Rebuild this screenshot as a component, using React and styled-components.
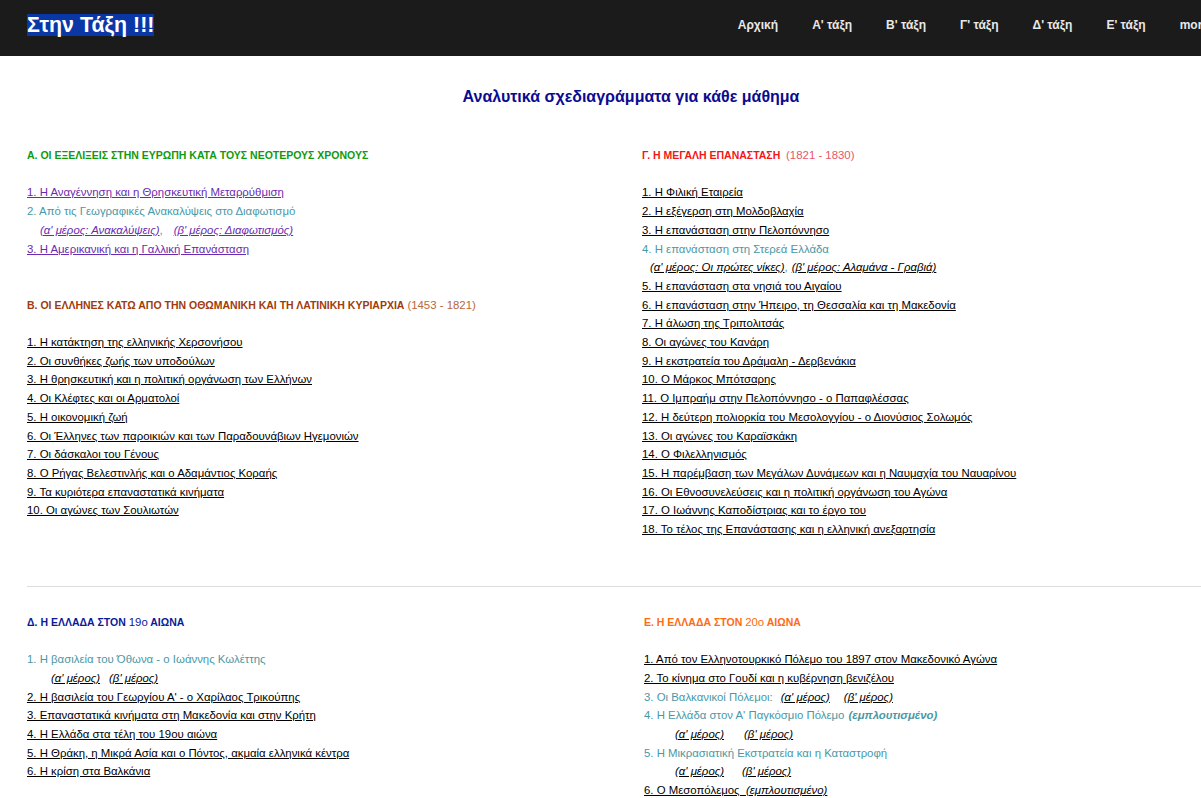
import React from 'react'
import styled, { createGlobalStyle } from 'styled-components'

const LINE = 18.7

const GlobalStyle = createGlobalStyle`
  html { scrollbar-width: none; }
  body {
    margin: 0;
    background: #fff;
    font-family: "Liberation Sans", Arial, sans-serif;
    font-size: 11.4px;
    overflow-x: hidden;
  }
`

const Page = styled.div`
  width: 1262px;
`

const TopBar = styled.header`
  height: 56px;
  box-sizing: border-box;
  background: #1b1b1b;
  display: flex;
  align-items: flex-start;
  padding: 14px 36px 0 27px;
`

const Logo = styled.a`
  font-size: 21.4px;
  font-weight: bold;
  line-height: 22px;
  color: #fff;
  background: #0a37a6;
  text-decoration: none;
  white-space: nowrap;
`

const Nav = styled.nav`
  display: flex;
  margin-left: auto;
`

const NavItem = styled.a`
  padding: 0 17px;
  font-size: 12px;
  font-weight: bold;
  line-height: 22px;
  color: #e8e8e8;
  text-decoration: none;
  white-space: nowrap;
`

const Main = styled.main`
  padding: 0 27px;
`

const Title = styled.h1`
  margin: 32px 0 40px;
  text-align: center;
  font-size: 16px;
  line-height: 18px;
  font-weight: bold;
  color: #0b0b8f;
`

const Columns = styled.div`
  display: grid;
  grid-template-columns: 615px 1fr;
`

const Section = styled.section`
  padding-left: ${p => p.$shift || 0}px;
  margin-bottom: ${p => (p.$last ? 0 : LINE * 2)}px;
`

const Heading = styled.h2`
  margin: 0 0 ${LINE}px;
  font-size: 10.5px;
  line-height: ${LINE}px;
  font-weight: bold;
  color: ${p => p.$color};
  white-space: nowrap;
`

const Light = styled.span`
  font-size: 11.4px;
  font-weight: normal;
  color: ${p => p.$color || 'inherit'};
`

const Line = styled.div`
  line-height: ${LINE}px;
  padding-left: ${p => p.$indent || 0}px;
  color: #4a98a6;
  white-space: nowrap;
`

const Link = styled.a`
  color: ${p => (p.$tone === 'purple' ? '#6a2bb0' : '#000')};
  font-style: ${p => (p.$italic ? 'italic' : 'normal')};
  text-decoration: underline;
  margin-left: ${p => p.$gap || 0}px;
  cursor: pointer;
`

const Note = styled.span`
  font-style: italic;
  font-weight: bold;
  margin-left: ${p => p.$gap || 0}px;
`

const Divider = styled.hr`
  border: none;
  border-top: 1px solid #dcdcdc;
  margin: 47px 0 26px;
`

const nav = ["Αρχική", "Α' τάξη", "Β' τάξη", "Γ' τάξη", "Δ' τάξη", "Ε' τάξη", "more"]

const sectionB = [
  '1. Η κατάκτηση της ελληνικής Χερσονήσου',
  '2. Οι συνθήκες ζωής των υποδούλων',
  '3. Η θρησκευτική και η πολιτική οργάνωση των Ελλήνων',
  '4. Οι Κλέφτες και οι Αρματολοί',
  '5. Η οικονομική ζωή',
  '6. Οι Έλληνες των παροικιών και των Παραδουνάβιων Ηγεμονιών',
  '7. Οι δάσκαλοι του Γένους',
  '8. Ο Ρήγας Βελεστινλής και ο Αδαμάντιος Κοραής',
  '9. Τα κυριότερα επαναστατικά κινήματα',
  '10. Οι αγώνες των Σουλιωτών',
]

const sectionCTop = [
  '1. Η Φιλική Εταιρεία',
  '2. Η εξέγερση στη Μολδοβλαχία',
  '3. Η επανάσταση στην Πελοπόννησο',
]

const sectionCBottom = [
  '5. Η επανάσταση στα νησιά του Αιγαίου',
  '6. Η επανάσταση στην Ήπειρο, τη Θεσσαλία και τη Μακεδονία',
  '7. Η άλωση της Τριπολιτσάς',
  '8. Οι αγώνες του Κανάρη',
  '9. Η εκστρατεία του Δράμαλη - Δερβενάκια',
  '10. Ο Μάρκος Μπότσαρης',
  '11. Ο Ιμπραήμ στην Πελοπόννησο - ο Παπαφλέσσας',
  '12. Η δεύτερη πολιορκία του Μεσολογγίου - ο Διονύσιος Σολωμός',
  '13. Οι αγώνες του Καραϊσκάκη',
  '14. Ο Φιλελληνισμός',
  '15. Η παρέμβαση των Μεγάλων Δυνάμεων και η Ναυμαχία του Ναυαρίνου',
  '16. Οι Εθνοσυνελεύσεις και η πολιτική οργάνωση του Αγώνα',
  '17. Ο Ιωάννης Καποδίστριας και το έργο του',
  '18. Το τέλος της Επανάστασης και η ελληνική ανεξαρτησία',
]

const sectionD = [
  "2. Η βασιλεία του Γεωργίου Α' - ο Χαρίλαος Τρικούπης",
  '3. Επαναστατικά κινήματα στη Μακεδονία και στην Κρήτη',
  '4. Η Ελλάδα στα τέλη του 19ου αιώνα',
  '5. Η Θράκη, η Μικρά Ασία και ο Πόντος, ακμαία ελληνικά κέντρα',
  '6. Η κρίση στα Βαλκάνια',
]

const LinkLines = ({ items }) =>
  items.map(text => (
    <Line key={text}>
      <Link>{text}</Link>
    </Line>
  ))

const Parts = ({ indent, gap }) => (
  <Line $indent={indent}>
    <Link $italic>(α' μέρος)</Link>
    <Link $italic $gap={gap}>(β' μέρος)</Link>
  </Line>
)

const App = () => {
  return (
    <Page>
      <GlobalStyle />
      <TopBar>
        <Logo>Στην Τάξη !!!</Logo>
        <Nav>
          {nav.map(item => (
            <NavItem key={item}>{item}</NavItem>
          ))}
        </Nav>
      </TopBar>

      <Main>
        <Title>Αναλυτικά σχεδιαγράμματα για κάθε μάθημα</Title>

        <Columns>
          <div>
            <Section>
              <Heading $color="#119a0c">Α. ΟΙ ΕΞΕΛΙΞΕΙΣ ΣΤΗΝ ΕΥΡΩΠΗ ΚΑΤΑ ΤΟΥΣ ΝΕΟΤΕΡΟΥΣ ΧΡΟΝΟΥΣ</Heading>
              <Line>
                <Link $tone="purple">1. Η Αναγέννηση και η Θρησκευτική Μεταρρύθμιση</Link>
              </Line>
              <Line>2. Από τις Γεωγραφικές Ανακαλύψεις στο Διαφωτισμό</Line>
              <Line $indent={13}>
                <Link $tone="purple" $italic>(α' μέρος: Ανακαλύψεις)</Link>,
                <Link $tone="purple" $italic $gap={11}>(β' μέρος: Διαφωτισμός)</Link>
              </Line>
              <Line>
                <Link $tone="purple">3. Η Αμερικανική και η Γαλλική Επανάσταση</Link>
              </Line>
            </Section>

            <Section $last>
              <Heading $color="#a03c0c">
                Β. ΟΙ ΕΛΛΗΝΕΣ ΚΑΤΩ ΑΠΟ ΤΗΝ ΟΘΩΜΑΝΙΚΗ ΚΑΙ ΤΗ ΛΑΤΙΝΙΚΗ ΚΥΡΙΑΡΧΙΑ{' '}
                <Light $color="#b8683a">(1453 - 1821)</Light>
              </Heading>
              <LinkLines items={sectionB} />
            </Section>
          </div>

          <Section $last>
            <Heading $color="#f41616">
              Γ. Η ΜΕΓΑΛΗ ΕΠΑΝΑΣΤΑΣΗ&nbsp; <Light $color="#e8566a">(1821 - 1830)</Light>
            </Heading>
            <LinkLines items={sectionCTop} />
            <Line>4. Η επανάσταση στη Στερεά Ελλάδα</Line>
            <Line $indent={8}>
              <Link $italic>(α' μέρος: Οι πρώτες νίκες)</Link>,
              <Link $italic $gap={4}>(β' μέρος: Αλαμάνα - Γραβιά)</Link>
            </Line>
            <LinkLines items={sectionCBottom} />
          </Section>
        </Columns>

        <Divider />

        <Columns>
          <Section $last>
            <Heading $color="#0a1a9a">
              Δ. Η ΕΛΛΑΔΑ ΣΤΟΝ <Light>19ο</Light> ΑΙΩΝΑ
            </Heading>
            <Line>1. Η βασιλεία του Όθωνα - ο Ιωάννης Κωλέττης</Line>
            <Parts indent={24} gap={9} />
            <LinkLines items={sectionD} />
          </Section>

          <Section $last $shift={2}>
            <Heading $color="#ff6a13">
              Ε. Η ΕΛΛΑΔΑ ΣΤΟΝ <Light>20ο</Light> ΑΙΩΝΑ
            </Heading>
            <LinkLines
              items={[
                '1. Από τον Ελληνοτουρκικό Πόλεμο του 1897 στον Μακεδονικό Αγώνα',
                '2. Το κίνημα στο Γουδί και η κυβέρνηση βενιζέλου',
              ]}
            />
            <Line>
              3. Οι Βαλκανικοί Πόλεμοι:
              <Link $italic $gap={8}>(α' μέρος)</Link>
              <Link $italic $gap={14}>(β' μέρος)</Link>
            </Line>
            <Line>
              4. Η Ελλάδα στον Α' Παγκόσμιο Πόλεμο
              <Note $gap={4}>(εμπλουτισμένο)</Note>
            </Line>
            <Parts indent={31} gap={20} />
            <Line>5. Η Μικρασιατική Εκστρατεία και η Καταστροφή</Line>
            <Parts indent={31} gap={18} />
            <Line>
              <Link>
                6. Ο Μεσοπόλεμος&nbsp; <i>(εμπλουτισμένο)</i>
              </Link>
            </Line>
          </Section>
        </Columns>
      </Main>
    </Page>
  )
}

export default App
